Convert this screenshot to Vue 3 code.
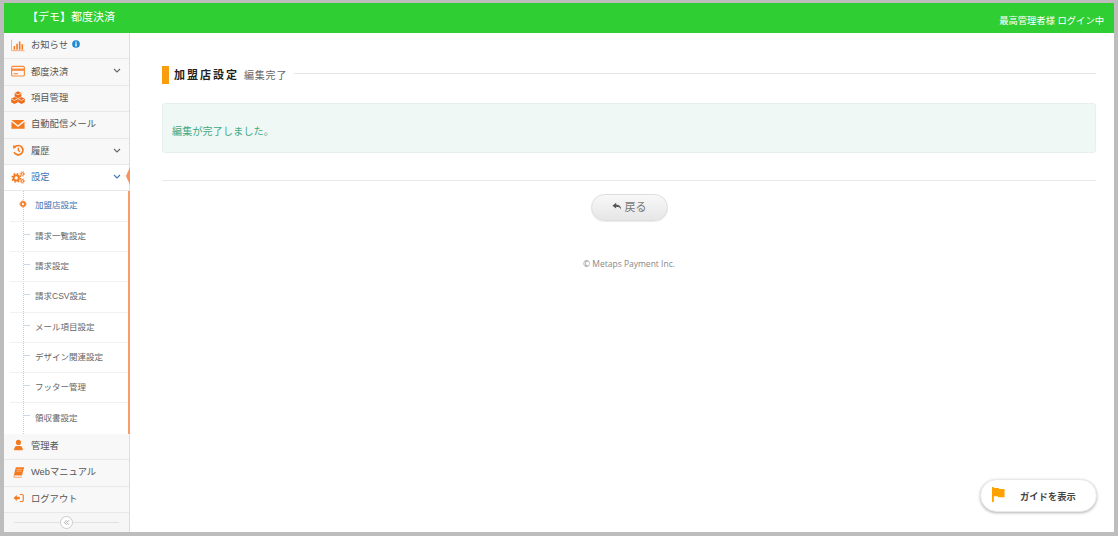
<template>
  <div class="frame">
    <header class="topbar">
      <div class="brand">【デモ】都度決済</div>
      <div class="login">最高管理者様 ログイン中</div>
    </header>
    <div class="body">
      <aside class="side">
        <nav class="menu">
          <template v-for="item in menu" :key="item.label">
            <div :class="['item', { open: item.open }]">
              <svg class="ico" viewBox="0 0 16 16" v-html="icons[item.icon]"></svg>
              <span class="label">{{ item.label }}</span>
              <svg v-if="item.info" class="info" viewBox="0 0 10 10">
                <circle cx="5" cy="5" r="4.800" fill="#1e88d2" />
                <rect x="4.100" y="4.200" width="1.800" height="3.800" fill="#fff" />
                <rect x="4.100" y="2" width="1.800" height="1.500" fill="#fff" />
              </svg>
              <svg v-if="item.arrow" class="chev" viewBox="0 0 8 5">
                <path d="M1 1l3 3 3-3" fill="none" stroke="currentColor" stroke-width="1.100" />
              </svg>
              <span v-if="item.open" class="notch"></span>
            </div>
            <ul v-if="item.open" class="sub">
              <li v-for="(s, i) in subs" :key="s" :class="{ current: i === 0 }">
                <svg v-if="i === 0" class="dot" viewBox="0 0 8 8">
                  <circle cx="4" cy="4" r="3" fill="none" stroke="#f47a1f" stroke-width="1" stroke-dasharray="1 .6" />
                  <circle cx="4" cy="4" r="2" fill="none" stroke="#f47a1f" stroke-width="1.600" />
                </svg>
                <span v-else class="tick"></span>
                {{ s }}
              </li>
            </ul>
          </template>
        </nav>
        <div class="collapse">
          <span class="collapse-btn">
            <svg viewBox="0 0 8 8">
              <path d="M4 1.500L1.500 4 4 6.500M6.800 1.500L4.300 4l2.500 2.500" fill="none" stroke="#999" stroke-width="1" />
            </svg>
          </span>
        </div>
      </aside>
      <main class="main">
        <div class="title-row">
          <span class="mark"></span>
          <h1>加盟店設定</h1>
          <span class="subtitle">編集完了</span>
          <span class="rule"></span>
        </div>
        <div class="notice">編集が完了しました。</div>
        <hr class="sep" />
        <div class="actions">
          <button class="back">
            <svg viewBox="0 0 12 10">
              <path d="M5 .5L.5 4 5 7.500V5.300c3 0 4.800.8 6 3.600 0-3.800-2-6-6-6.200z" fill="#555" />
            </svg>
            戻る
          </button>
        </div>
        <p class="copy">© Metaps Payment Inc.</p>
        <button class="guide">
          <svg viewBox="0 0 14 16">
            <path d="M0 0h2v16H0zM2 1h5l1 1h5.500v9H7l-1-1H2z" fill="#ffa200" />
          </svg>
          <span>ガイドを表示</span>
        </button>
      </main>
    </div>
  </div>
</template>

<script setup>
const icons = {
  chart: '<path d="M.5 2v12.500h15" fill="none" stroke="#f8a36c" stroke-width="1"/><path d="M3 9h1.800v4.500H3zM6 6.500h1.800v7H6zM9 4h1.800v9.500H9zM12 7h1.800v6.500H12z" fill="#f47a1f"/>',
  card: '<rect x=".7" y="2.700" width="14.600" height="11" rx="1.500" fill="none" stroke="#f8893a" stroke-width="1.300"/><rect x="1" y="5.200" width="14" height="2.600" fill="#f8893a"/><rect x="3" y="10.500" width="5" height="1.200" fill="#f8893a"/>',
  cubes: '<path d="M8 1.500l3.800 2v3.900L8 9.400 4.200 7.400V3.500zM4 8l3.800 2v3.900L4 15.900.2 13.900V10zM12 8l3.800 2v3.900L12 15.900l-3.800-2V10z" fill="#ef6c1a"/><path d="M4.800 3.800L8 5.500l3.200-1.700M.8 10.300L4 12l3.200-1.700M8.800 10.300L12 12l3.200-1.700" fill="none" stroke="#fff" stroke-width=".8"/>',
  mail: '<path d="M.5 3.500h15L8 9.300zM.5 5.500v8h15v-8L8 11.300z" fill="#f47a1f"/>',
  history: '<path d="M4.300 4.700A5.300 5.300 0 1 1 3.500 10.500" fill="none" stroke="#f47a1f" stroke-width="1.900"/><path d="M2 2.800l4.800.5-3.700 3.700z" fill="#f47a1f"/><path d="M8.400 5.500V8.500l2 1.300" fill="none" stroke="#f47a1f" stroke-width="1.500"/>',
  gears: '<circle cx="6" cy="9" r="3" fill="none" stroke="#f47a1f" stroke-width="2.200"/><circle cx="6" cy="9" r="4.800" fill="none" stroke="#f47a1f" stroke-width="1.600" stroke-dasharray="2 1.770"/><circle cx="13" cy="4.500" r="1.500" fill="none" stroke="#f8893a" stroke-width="1.300"/><circle cx="13" cy="4.500" r="2.700" fill="none" stroke="#f8893a" stroke-width="1" stroke-dasharray="1.200 1.200"/><circle cx="13" cy="12.500" r="1.500" fill="none" stroke="#f8893a" stroke-width="1.300"/><circle cx="13" cy="12.500" r="2.700" fill="none" stroke="#f8893a" stroke-width="1" stroke-dasharray="1.200 1.200"/>',
  user: '<circle cx="8.500" cy="5" r="2.900" fill="#f47a1f"/><path d="M3.500 14c0-3.200 1.300-5 3-5h4c1.700 0 3 1.800 3 5z" fill="#f47a1f"/>',
  book: '<path d="M5.500 2.500h9.500l-2.500 9.500H3.200z" fill="#f47a1f"/><path d="M6.500 5h6M6 7h6" stroke="#fbc49c" stroke-width=".8"/><path d="M3.200 12c-1 1.800-.3 2.500.8 2.500h8.300l.3-1H4.200c-.6 0-.6-1 0-1.500" fill="#f8a36c"/>',
  logout: '<path d="M3 8l3.600-3.300v2H10v2.600H6.600v2z" fill="#f47a1f"/><path d="M10 4h2.500a1.500 1.500 0 0 1 1.500 1.500v5a1.500 1.500 0 0 1-1.500 1.500H10" fill="none" stroke="#f47a1f" stroke-width="1.300"/>',
}

const menu = [
  { label: 'お知らせ', icon: 'chart', info: true },
  { label: '都度決済', icon: 'card', arrow: true },
  { label: '項目管理', icon: 'cubes' },
  { label: '自動配信メール', icon: 'mail' },
  { label: '履歴', icon: 'history', arrow: true },
  { label: '設定', icon: 'gears', arrow: true, open: true },
  { label: '管理者', icon: 'user' },
  { label: 'Webマニュアル', icon: 'book' },
  { label: 'ログアウト', icon: 'logout' },
]

const subs = [
  '加盟店設定',
  '請求一覧設定',
  '請求設定',
  '請求CSV設定',
  'メール項目設定',
  'デザイン関連設定',
  'フッター管理',
  '領収書設定',
]
</script>

<style>
html, body {
  margin: 0;
  background: #fff;
}
</style>

<style scoped>
.frame {
  width: 1118px;
  height: 536px;
  box-sizing: border-box;
  border: solid #bdbdbd;
  border-width: 3px 4px 4px 4px;
  display: flex;
  flex-direction: column;
  font-family: "Liberation Sans", "Noto Sans CJK JP", sans-serif;
  font-size: 10px;
  color: #555;
  overflow: hidden;
}

.topbar {
  height: 30px;
  flex: none;
  background: #2fce33;
  color: #fff;
  display: flex;
  align-items: center;
  justify-content: space-between;
  padding: 0 10px 0 23px;
}

.brand {
  font-size: 11px;
  margin-top: -4px;
}

.login {
  font-size: 9.300px;
  margin-top: 4px;
}

.body {
  flex: 1;
  display: flex;
  min-height: 0;
}

.side {
  width: 126px;
  flex: none;
  box-sizing: border-box;
  background: #f8f8f8;
  border-right: 1px solid #ddd;
  display: flex;
  flex-direction: column;
}

.menu {
  flex: 1;
}

.item {
  height: 26.400px;
  box-sizing: border-box;
  border-bottom: 1px solid #e8e8e8;
  display: flex;
  align-items: center;
  padding: 0 0 2px 7px;
  position: relative;
  color: #555;
  font-size: 9.300px;
}

.item.open {
  background: #fff;
  color: #3a78b8;
}

.ico {
  width: 14px;
  height: 14px;
  flex: none;
  margin-right: 6px;
}

.label {
  margin-bottom: 1px;
}

.info {
  width: 8px;
  height: 8px;
  margin: 0 0 2px 4px;
}

.chev {
  position: absolute;
  right: 8px;
  top: 9px;
  width: 8px;
  height: 5px;
  color: #666;
}

.item.open .chev {
  color: #3a78b8;
}

.notch {
  position: absolute;
  right: -1px;
  top: 2px;
  width: 4px;
  height: 18px;
  background: #f8935a;
  clip-path: polygon(100% 0, 100% 100%, 0 50%);
}

.sub {
  list-style: none;
  margin: 0 -1px 0 0;
  padding: 0;
  background: #fff;
  border-right: 2px solid #fa9c6c;
  position: relative;
}

.sub::before {
  content: "";
  position: absolute;
  left: 19px;
  top: 0;
  bottom: 0;
  border-left: 1px dotted #b9cfe6;
}

.sub li {
  height: 30.300px;
  box-sizing: border-box;
  display: flex;
  align-items: center;
  padding: 0 0 4px 31px;
  font-size: 8.500px;
  color: #666;
  position: relative;
}

.sub li::after {
  content: "";
  position: absolute;
  left: 6px;
  right: 0;
  bottom: 0;
  border-bottom: 1px solid #f1f1f1;
}

.sub li:last-child::after {
  display: none;
}

.sub li.current {
  color: #3a78b8;
}

.tick {
  position: absolute;
  left: 20px;
  top: 12px;
  width: 6px;
  border-top: 1px solid #c9d9ea;
}

.dot {
  position: absolute;
  left: 15px;
  top: 9px;
  width: 8px;
  height: 8px;
}

.collapse {
  height: 19px;
  flex: none;
  display: flex;
  align-items: center;
  justify-content: center;
  position: relative;
  background: #f6f6f6;
}

.collapse::before {
  content: "";
  position: absolute;
  left: 10px;
  right: 10px;
  top: 9px;
  border-top: 1px solid #e2e2e2;
}

.collapse-btn {
  position: relative;
  width: 13px;
  height: 13px;
  box-sizing: border-box;
  border: 1px solid #ccc;
  border-radius: 50%;
  background: #fff;
  display: flex;
  align-items: center;
  justify-content: center;
}

.collapse-btn svg {
  width: 7px;
  height: 7px;
}

.main {
  flex: 1;
  min-width: 0;
  background: #fff;
  padding: 33px 18px 0 32px;
  position: relative;
}

.title-row {
  display: flex;
  align-items: center;
  height: 18px;
}

.mark {
  width: 7px;
  height: 18px;
  background: #f99d0c;
  margin-right: 5px;
}

h1 {
  margin: 0 0 2px;
  font-size: 11px;
  font-weight: 700;
  letter-spacing: 2px;
  color: #222;
}

.subtitle {
  margin: 0 0 2px 5px;
  font-size: 10px;
  letter-spacing: 0.800px;
  color: #666;
}

.rule {
  flex: 1;
  margin: -4px 0 0 7px;
  border-top: 1px solid #e6e6e6;
}

.notice {
  margin-top: 19px;
  height: 50px;
  box-sizing: border-box;
  background: #f0f8f5;
  border: 1px solid #e6f1ed;
  border-radius: 3px;
  padding: 21px 9px 0;
  font-size: 10px;
  letter-spacing: 0.200px;
  line-height: 14px;
  color: #3fa886;
}

.sep {
  margin: 27px 0 0;
  border: 0;
  border-top: 1px solid #e8e8e8;
}

.actions {
  display: flex;
  justify-content: center;
  margin-top: 13px;
}

.back {
  width: 77px;
  height: 27px;
  border: 1px solid #ddd;
  border-radius: 14px;
  background: linear-gradient(#f8f8f8, #e6e6e6);
  box-shadow: 0 1px 1px rgba(0, 0, 0, 0.08);
  font: inherit;
  font-size: 11px;
  color: #777;
  display: flex;
  align-items: center;
  justify-content: center;
  gap: 3px;
  padding: 0 0 3px;
}

.back svg {
  width: 10px;
  height: 9px;
}

.copy {
  margin: 37px 0 0;
  text-align: center;
  font-size: 8.500px;
  font-family: "Open Sans", "Liberation Sans", sans-serif;
  color: #888;
  line-height: 12px;
}

.guide {
  position: absolute;
  right: 17px;
  bottom: 20px;
  width: 117px;
  height: 33px;
  box-sizing: border-box;
  border: 1px solid #e8e8e8;
  border-radius: 17px;
  background: #fff;
  box-shadow: 0 1px 3px rgba(0, 0, 0, 0.3);
  font: inherit;
  font-size: 9.300px;
  font-weight: 700;
  color: #444;
  display: flex;
  align-items: center;
  padding: 0 0 0 11px;
}

.guide svg {
  width: 13px;
  height: 15px;
  margin: -3px 15px 0 0;
}
</style>
